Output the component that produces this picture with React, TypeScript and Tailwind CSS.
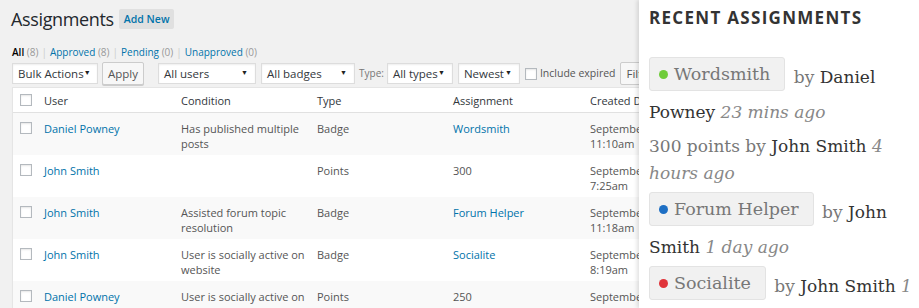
import React from "react";

type Row = {
  user: string;
  condition: string[];
  type: string;
  assignment: string;
  link: boolean;
  created: string;
};

const rows: Row[] = [
  { user: "Daniel Powney", condition: ["Has published multiple", "posts"], type: "Badge", assignment: "Wordsmith", link: true, created: "11:10am" },
  { user: "John Smith", condition: [], type: "Points", assignment: "300", link: false, created: "7:25am" },
  { user: "John Smith", condition: ["Assisted forum topic", "resolution"], type: "Badge", assignment: "Forum Helper", link: true, created: "11:18am" },
  { user: "John Smith", condition: ["User is socially active on", "website"], type: "Badge", assignment: "Socialite", link: true, created: "8:19am" },
  { user: "Daniel Powney", condition: ["User is socially active on", "website"], type: "Points", assignment: "250", link: false, created: "11:17am" },
];

function Select({ label, w }: { label: string; w: string }) {
  return (
    <div className={`${w} shrink-0 h-[21px] flex items-center justify-between bg-white border border-[#dddddd] shadow-[inset_0_1px_2px_rgba(0,0,0,0.07)] pl-[5px] pr-[7px] text-[11.5px] text-[#32373c]`}>
      <span>{label}</span>
      <span className="text-[7px] text-[#222]">▼</span>
    </div>
  );
}

function Check() {
  return <span className="block w-[12px] h-[12px] bg-white border border-[#b4b9be] shadow-[inset_0_1px_2px_rgba(0,0,0,0.1)]" />;
}

function Badge({ name, dot }: { name: string; dot: string }) {
  return (
    <span className="inline-flex items-center gap-[6px] align-middle h-[34px] mb-[8px] bg-[#f1f1f1] border border-[#e3e3e3] rounded-[3px] pl-[9px] pr-[14px] text-[17.5px] text-[#777] mr-[3px]">
      <span className={`w-[9px] h-[9px] rounded-full shrink-0 ${dot}`} />
      {name}
    </span>
  );
}

export default function App() {
  return (
    <div className="w-[919px] h-[308px] overflow-hidden flex bg-[#f1f1f1]" style={{ fontFamily: "'Open Sans', sans-serif" }}>
      <div className="w-[639px] shrink-0 overflow-hidden pl-[12px]">
        <div className="flex items-center gap-[5px] pt-[7px] h-[31px]">
          <h1 className="text-[18px] tracking-[-0.35px] text-[#23282d] leading-[24px] -ml-[1px]">Assignments</h1>
          <span className="bg-[#e0e0e0] text-[#0073aa] text-[10.5px] font-semibold px-[5px] py-[2px] leading-[16px] rounded-[2px]">Add New</span>
        </div>
        <div className="mt-[14px] text-[10px] leading-[14px] text-[#555] whitespace-nowrap">
          <span className="text-[#000] font-semibold">All</span> <span className="text-[#999]">(8)</span>
          <span className="text-[#ccc] mx-[3px]">|</span>
          <span className="text-[#0073aa]">Approved</span> <span className="text-[#999]">(8)</span>
          <span className="text-[#ccc] mx-[3px]">|</span>
          <span className="text-[#0073aa]">Pending</span> <span className="text-[#999]">(0)</span>
          <span className="text-[#ccc] mx-[3px]">|</span>
          <span className="text-[#0073aa]">Unapproved</span> <span className="text-[#999]">(0)</span>
        </div>
        <div className="mt-[3px] flex items-center whitespace-nowrap">
          <Select label="Bulk Actions" w="w-[86px]" />
          <span className="shrink-0 ml-[4px] h-[23px] w-[42px] flex items-center justify-center bg-[#f7f7f7] border border-[#cccccc] rounded-[2px] text-[11.5px] text-[#555] shadow-[0_1px_0_#ccc]">Apply</span>
          <div className="shrink-0 ml-[14px]"><Select label="All users" w="w-[98px]" /></div>
          <div className="shrink-0 ml-[5px]"><Select label="All badges" w="w-[94px]" /></div>
          <span className="shrink-0 ml-[4px] text-[10px] text-[#777]">Type:</span>
          <div className="shrink-0 ml-[3px]"><Select label="All types" w="w-[66px]" /></div>
          <div className="shrink-0 ml-[5px]"><Select label="Newest" w="w-[62px]" /></div>
          <span className="shrink-0 ml-[5px]"><Check /></span>
          <span className="shrink-0 ml-[3px] text-[10.5px] text-[#555]">Include expired</span>
          <span className="shrink-0 ml-[4px] h-[23px] w-[40px] flex items-center pl-[6px] bg-[#f7f7f7] border border-[#cccccc] rounded-[2px] text-[11.5px] text-[#555]">Filter</span>
        </div>
        <div className="mt-[2px] w-[700px] border border-[#e5e5e5] bg-white text-[11px] leading-[15px] shadow-[0_1px_1px_rgba(0,0,0,0.04)]">
          <div className="flex items-center h-[25px] border-b border-[#e1e1e1] text-[#32373c]">
            <div className="w-[31px] pl-[7px]"><Check /></div>
            <div className="w-[137px]">User</div>
            <div className="w-[136px]">Condition</div>
            <div className="w-[136px]">Type</div>
            <div className="w-[137px]">Assignment</div>
            <div className="flex-1">Created Date</div>
          </div>
          {rows.map((r, i) => (
            <div key={i} className={`flex h-[42px] pt-[8px] text-[#555] ${i % 2 === 0 ? "bg-[#f9f9f9]" : "bg-white"}`}>
              <div className="w-[31px] pl-[7px] pt-[1px]"><Check /></div>
              <div className="w-[137px] text-[#0073aa]">{r.user}</div>
              <div className="w-[136px]">
                {r.condition.map((c) => (
                  <div key={c}>{c}</div>
                ))}
              </div>
              <div className="w-[136px]">{r.type}</div>
              <div className={`w-[137px] ${r.link ? "text-[#0073aa]" : ""}`}>{r.assignment}</div>
              <div className="flex-1">
                <div>September 18, 2015</div>
                <div>{r.created}</div>
              </div>
            </div>
          ))}
        </div>
      </div>
      <div className="flex-1 bg-white shadow-[-2px_0_4px_rgba(0,0,0,0.12)] pl-[10px] pt-[7px]">
        <h2 className="text-[17px] font-bold tracking-[1.3px] text-[#333] leading-[22px]">RECENT ASSIGNMENTS</h2>
        <ul className="mt-[28px] text-[17px] leading-[27px] text-[#333]" style={{ fontFamily: "'DejaVu Serif', serif" }}>
          <li className="mb-[7px]">
            <Badge name="Wordsmith" dot="bg-[#6fcc3a]" />{" "}
            <span className="text-[#777]">by</span> Daniel Powney <em className="text-[#888]">23 mins ago</em>
          </li>
          <li className="mb-[5px]">
            <span className="text-[#777]">300 points by</span> John Smith <em className="text-[#888]">4 hours ago</em>
          </li>
          <li className="mb-[5px]">
            <Badge name="Forum Helper" dot="bg-[#1e6fc4]" />{" "}
            <span className="text-[#777]">by</span> John Smith <em className="text-[#888]">1 day ago</em>
          </li>
          <li className="mb-[7px]">
            <Badge name="Socialite" dot="bg-[#e0343a]" />{" "}
            <span className="text-[#777]">by</span> John Smith <em className="text-[#888]">1 day ago</em>
          </li>
        </ul>
      </div>
    </div>
  );
}
